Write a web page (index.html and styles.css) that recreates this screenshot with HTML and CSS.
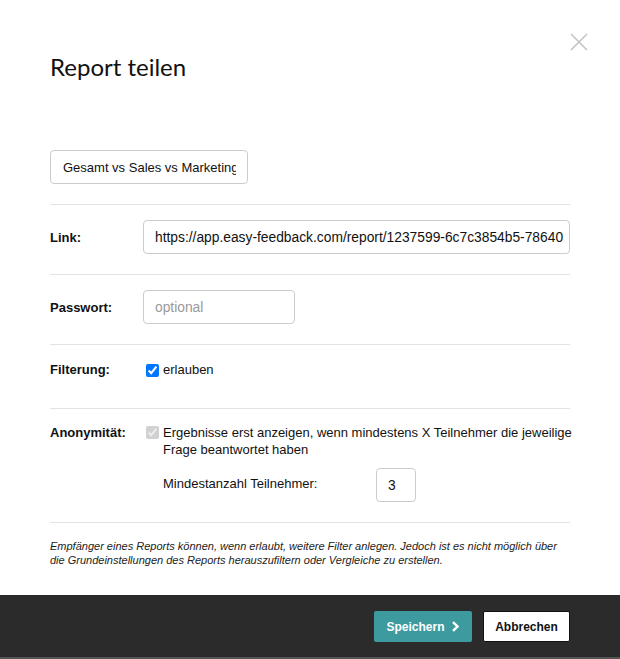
FILE: index.html
```html
<!DOCTYPE html>
<html lang="de">
<head>
  <meta charset="UTF-8">
  <meta name="viewport" content="width=device-width, initial-scale=1.0">
  <title>Report teilen</title>
  <link rel="stylesheet" href="styles.css">
</head>
<body>

  <div class="modal">
    <button class="close-button" aria-label="Schließen">
      <svg width="18" height="18" viewBox="0 0 18 18"><path d="M1 1L17 17M17 1L1 17" stroke="#c4c4c4" stroke-width="1.6" fill="none"/></svg>
    </button>

    <div class="modal-body">
      <h2 class="modal-title">Report teilen</h2>

      <div class="report-select">
        <span>Gesamt vs Sales vs Marketing</span>
      </div>

      <div class="form-row">
        <label class="row-label">Link:</label>
        <input class="text-input link-input" type="text" value="https://app.easy-feedback.com/report/1237599-6c7c3854b5-78640">
      </div>

      <div class="form-row">
        <label class="row-label">Passwort:</label>
        <input class="text-input password-input" type="text" placeholder="optional">
      </div>

      <div class="form-row filter-row">
        <label class="row-label">Filterung:</label>
        <label class="check-label"><input type="checkbox" checked> erlauben</label>
      </div>

      <div class="form-row anon-row">
        <label class="row-label">Anonymität:</label>
        <div class="anon-options">
          <div class="anon-check">
            <input type="checkbox" checked disabled>
            <span>Ergebnisse erst anzeigen, wenn mindestens X Teilnehmer die jeweilige Frage beantwortet haben</span>
          </div>
          <div class="min-count">
            <span class="min-label">Mindestanzahl Teilnehmer:</span>
            <input class="text-input count-input" type="text" value="3">
          </div>
        </div>
      </div>

      <p class="note">Empfänger eines Reports können, wenn erlaubt, weitere Filter anlegen. Jedoch ist es nicht möglich über die Grundeinstellungen des Reports herauszufiltern oder Vergleiche zu erstellen.</p>
    </div>

    <div class="modal-footer">
      <button class="save-button">Speichern
        <svg width="9" height="11" viewBox="0 0 9 11"><path d="M2 1.2L6.5 5.5L2 9.8" stroke="#fff" stroke-width="2.4" fill="none"/></svg>
      </button>
      <button class="cancel-button">Abbrechen</button>
    </div>
  </div>

</body>
</html>
```

FILE: styles.css
```css
body {
  font-family: "Liberation Sans", Arial, sans-serif;
  font-size: 13px;
  color: #111;
  margin: 0;
  background-color: #fff;
}

.modal {
  position: relative;
  width: 620px;
  height: 659px;
  display: flex;
  flex-direction: column;
}

.close-button {
  position: absolute;
  top: 33px;
  right: 32px;
  padding: 0;
  border: none;
  background: transparent;
  cursor: pointer;
}

.modal-body {
  flex: 1;
  padding: 50px 50px 0;
}

.modal-title {
  font-family: Lato, sans-serif;
  font-weight: 400;
  font-size: 24px;
  line-height: 34px;
  margin: 0 0 66px;
  color: #111;
}

.report-select {
  width: 198px;
  height: 34px;
  box-sizing: border-box;
  border: 1px solid #ccc;
  border-radius: 4px;
  padding: 0 11px 0 12px;
  display: flex;
  align-items: center;
  overflow: hidden;
  white-space: nowrap;
  margin-bottom: 20px;
}

.report-select span {
  overflow: hidden;
}

.form-row {
  display: flex;
  align-items: center;
  border-top: 1px solid #e3e3e3;
  padding: 15px 0 20px;
}

.row-label {
  width: 93px;
  flex-shrink: 0;
  font-weight: bold;
}

.text-input {
  height: 34px;
  box-sizing: border-box;
  border: 1px solid #ccc;
  border-radius: 4px;
  padding: 0 11px;
  font-family: "Liberation Sans", Arial, sans-serif;
  font-size: 13.8px;
  color: #111;
}

.text-input::placeholder {
  color: #999;
}

.link-input {
  flex: 1;
  padding-right: 2px;
}

.password-input {
  width: 152px;
}

.filter-row {
  height: 28px;
  align-items: flex-start;
}

.filter-row .row-label {
  line-height: 20px;
}

.check-label {
  display: flex;
  align-items: center;
  line-height: 20px;
}

input[type="checkbox"] {
  width: 13px;
  height: 13px;
  margin: 0 4px 0 3px;
}

.anon-row {
  align-items: flex-start;
  border-bottom: 1px solid #e3e3e3;
}

.anon-row .row-label {
  line-height: 17px;
}

.anon-options {
  flex: 1;
}

.anon-check {
  display: flex;
  align-items: flex-start;
  line-height: 17px;
  margin-right: -8px;
}

.anon-check input {
  margin-top: 2px;
  flex-shrink: 0;
}

.min-count {
  display: flex;
  align-items: center;
  padding-left: 20px;
  margin-top: 10px;
}

.min-label {
  width: 213px;
  margin-top: -4px;
}

.count-input {
  width: 40px;
  padding: 0 0 0 11px;
}

.note {
  font-size: 11px;
  font-style: italic;
  line-height: 14px;
  color: #222;
  margin: 16px 0 0;
}

.modal-footer {
  background-color: #2b2b2b;
  height: 61px;
  border-bottom: 2px solid #555;
  display: flex;
  justify-content: flex-end;
  align-items: center;
  gap: 11px;
  padding: 1px 50px 0;
}

.save-button,
.cancel-button {
  height: 31px;
  font-family: "Liberation Sans", Arial, sans-serif;
  font-size: 12px;
  font-weight: bold;
  border-radius: 2px;
  cursor: pointer;
}

.save-button {
  width: 98px;
  background-color: #3d9ba0;
  color: #fff;
  border: none;
  display: flex;
  align-items: center;
  justify-content: center;
  gap: 6px;
}

.cancel-button {
  width: 87px;
  background-color: #fff;
  color: #111;
  border: 1px solid #111;
}
```
